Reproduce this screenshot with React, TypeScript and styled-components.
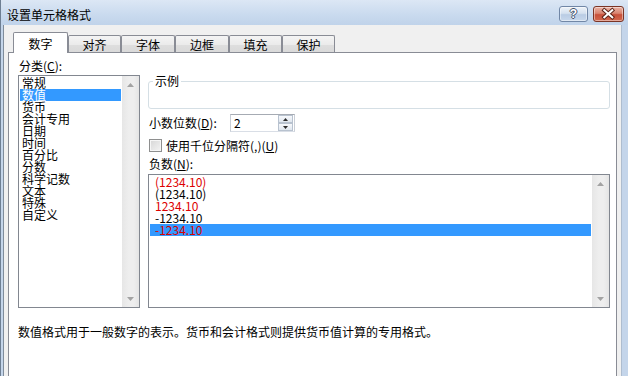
import React from "react";
import styled, { createGlobalStyle } from "styled-components";

const FONT = `"Noto Sans CJK SC", "Noto Sans", "Liberation Sans", sans-serif`;

const GlobalStyle = createGlobalStyle`
  html, body { margin: 0; padding: 0; background: #fff; }
  body { font-family: ${FONT}; font-size: 12px; color: #000; }
  * { box-sizing: border-box; }
`;

const Window = styled.div`
  width: 628px;
  height: 376px;
  overflow: hidden;
  display: flex;
  flex-direction: column;
  background: #c4d5ea;
  border-left: 1px solid #6e7f93;
  font-family: ${FONT};
  font-size: 12px;
`;

const TitleBar = styled.div`
  height: 25px;
  flex: none;
  display: flex;
  align-items: flex-start;
  justify-content: space-between;
  padding: 0 4px 0 6px;
  background: linear-gradient(#dce7f5, #c9daee 60%, #c0d3ea);
`;

const Title = styled.div`
  margin-top: 8px;
  line-height: 14px;
  color: #000;
`;

const Buttons = styled.div`
  margin-top: 6px;
  display: flex;
  gap: 5px;
`;

const CaptionButton = styled.div<{ $w: number; $close?: boolean }>`
  width: ${(p) => p.$w}px;
  height: 16px;
  border-radius: 3px;
  border: 1px solid ${(p) => (p.$close ? "#7b3526" : "#7187a6")};
  background: ${(p) =>
    p.$close
      ? "linear-gradient(#eab3a6, #d98571 45%, #c8503a 55%, #d2694f)"
      : "linear-gradient(#eef3f9, #d5e1ef 45%, #b9cce4 55%, #c8d8ec)"};
  box-shadow: inset 0 0 0 1px rgba(255, 255, 255, 0.45);
  display: flex;
  align-items: center;
  justify-content: center;
`;

const HelpGlyph = styled.span`
  font-family: "Liberation Sans", sans-serif;
  font-weight: bold;
  font-size: 12px;
  line-height: 12px;
  color: #fff;
  text-shadow: 1px 0 0 #42536d, -1px 0 0 #42536d, 0 1px 0 #42536d, 0 -1px 0 #42536d;
`;

const ClientRow = styled.div`
  flex: 1;
  display: flex;
  padding: 0 6px 0 2px;
  background: #c4d5ea;
  min-height: 0;
`;

const Client = styled.div`
  flex: 1;
  display: flex;
  flex-direction: column;
  background: #f0f0f0;
  border-left: 1px solid #7f8c9b;
  border-right: 1px solid #aebdcf;
  padding: 0 4px;
`;

const TabStrip = styled.div`
  height: 28px;
  flex: none;
  display: flex;
  align-items: flex-end;
  padding-left: 5px;
`;

const Tab = styled.div<{ $active?: boolean; $w: number }>`
  width: ${(p) => p.$w}px;
  height: ${(p) => (p.$active ? 21 : 18)}px;
  display: flex;
  align-items: center;
  justify-content: center;
  padding-top: ${(p) => (p.$active ? 2 : 1)}px;
  line-height: 14px;
  border: 1px solid #898c95;
  border-bottom: none;
  border-radius: 2px 2px 0 0;
  background: ${(p) =>
    p.$active ? "#fff" : "linear-gradient(#f4f4f4, #ebebeb 50%, #dedede 52%, #d9d9d9)"};
  position: relative;
  z-index: ${(p) => (p.$active ? 2 : 0)};
`;

const Panel = styled.div`
  margin-top: -1px;
  height: 340px;
  flex: none;
  background: #fff;
  border: 1px solid #898c95;
  padding: 6px 6px 0 9px;
  position: relative;
  z-index: 1;
`;

const Columns = styled.div`
  display: grid;
  grid-template-columns: 122px 462px;
  column-gap: 8px;
`;

const Column = styled.div`
  display: flex;
  flex-direction: column;
`;

const Label = styled.div<{ $gap?: number }>`
  line-height: 14px;
  height: 14px;
  padding-left: 1px;
  margin-top: ${(p) => p.$gap ?? 0}px;
`;

const ListBox = styled.div<{ $h?: number; $gap: number }>`
  display: flex;
  margin-top: ${(p) => p.$gap}px;
  border: 1px solid #828790;
  background: #fff;
  ${(p) => (p.$h ? `height: ${p.$h}px;` : "flex: 1;")}
`;

const Items = styled.div`
  flex: 1;
  padding: 1px;
  display: flex;
  flex-direction: column;
  min-width: 0;
`;

const Item = styled.div<{ $sel?: boolean; $red?: boolean; $pad: number }>`
  height: 12px;
  line-height: 12px;
  padding-left: ${(p) => p.$pad}px;
  white-space: nowrap;
  background: ${(p) => (p.$sel ? "#3399ff" : "transparent")};
  color: ${(p) => (p.$red ? "#dd0000" : p.$sel ? "#fff" : "#000")};
`;

const ScrollBar = styled.div`
  width: 17px;
  flex: none;
  display: flex;
  flex-direction: column;
  justify-content: space-between;
  background: linear-gradient(90deg, #e6e6e6, #eeeeee 40%, #eeeeee 70%, #e4e4e4);
`;

const ScrollArrow = styled.div`
  height: 17px;
  display: flex;
  align-items: center;
  justify-content: center;
`;

const Sample = styled.fieldset`
  margin: 15px 0 0 0;
  padding: 0;
  min-width: 0;
  height: 35px;
  border: 1px solid #d5dfe5;
  border-radius: 3px;
`;

const Legend = styled.legend`
  margin-left: 4px;
  padding: 0 2px;
  line-height: 14px;
`;

const FieldRow = styled.div`
  margin-top: 5px;
  height: 18px;
  display: flex;
  align-items: center;
`;

const FieldLabel = styled.div`
  width: 82px;
  padding-left: 1px;
  line-height: 14px;
`;

const Spin = styled.div`
  width: 65px;
  height: 18px;
  display: flex;
  border: 1px solid;
  border-color: #a6abb3 #c9ced6 #d9dee6 #c9ced6;
  background: #fff;
`;

const SpinValue = styled.div`
  flex: 1;
  padding-left: 3px;
  line-height: 16px;
`;

const SpinButtons = styled.div`
  width: 16px;
  display: flex;
  flex-direction: column;
  padding: 0 1px 0 0;
`;

const SpinButton = styled.div`
  flex: 1;
  border: 1px solid #b8c2cf;
  background: linear-gradient(#f7f9fc, #dfe6ee);
  display: flex;
  align-items: center;
  justify-content: center;
`;

const CheckRow = styled.div`
  margin-top: 6px;
  height: 15px;
  display: flex;
  align-items: center;
  gap: 4px;
  line-height: 14px;
`;

const CheckBox = styled.div`
  width: 13px;
  height: 13px;
  margin-left: 1px;
  border: 1px solid #8e8f8f;
  background: linear-gradient(135deg, #d6d6d6, #f4f4f4);
  box-shadow: inset 0 0 0 1px #f6f6f6;
`;

const Description = styled.div`
  margin-top: 17px;
  line-height: 14px;
`;

const Tri = ({ down }: { down?: boolean }) => (
  <svg width="7" height="4" viewBox="0 0 7 4">
    <path d={down ? "M0 0H7L3.5 4Z" : "M0 4H7L3.5 0Z"} fill="#a3a3a3" />
  </svg>
);

const SmallTri = ({ down }: { down?: boolean }) => (
  <svg width="5" height="3" viewBox="0 0 5 3">
    <path d={down ? "M0 0H5L2.5 3Z" : "M0 3H5L2.5 0Z"} fill="#2b2b2b" />
  </svg>
);

const Scroll = () => (
  <ScrollBar>
    <ScrollArrow>
      <Tri />
    </ScrollArrow>
    <ScrollArrow>
      <Tri down />
    </ScrollArrow>
  </ScrollBar>
);

const tabs = [
  { label: "数字", w: 55, active: true },
  { label: "对齐", w: 53 },
  { label: "字体", w: 54 },
  { label: "边框", w: 54 },
  { label: "填充", w: 53 },
  { label: "保护", w: 53 },
];

const categories = ["常规", "数值", "货币", "会计专用", "日期", "时间", "百分比", "分数", "科学记数", "文本", "特殊", "自定义"];

const negatives = [
  { t: "(1234.10)", red: true },
  { t: "(1234.10)" },
  { t: "1234.10", red: true },
  { t: "-1234.10" },
  { t: "-1234.10", red: true, sel: true },
];

export default function App() {
  return (
    <>
      <GlobalStyle />
      <Window>
        <TitleBar>
          <Title>设置单元格格式</Title>
          <Buttons>
            <CaptionButton $w={29}>
              <HelpGlyph>?</HelpGlyph>
            </CaptionButton>
            <CaptionButton $w={31} $close>
              <svg width="31" height="14" viewBox="0 0 31 14">
                <path d="M11 3L19.5 10.5M19.5 3L11 10.5" stroke="#5a2216" strokeWidth="4.2" strokeLinecap="square" />
                <path d="M11 3L19.5 10.5M19.5 3L11 10.5" stroke="#fff" strokeWidth="2.2" strokeLinecap="square" />
              </svg>
            </CaptionButton>
          </Buttons>
        </TitleBar>
        <ClientRow>
          <Client>
            <TabStrip>
              {tabs.map((t) => (
                <Tab key={t.label} $w={t.w} $active={t.active}>
                  {t.label}
                </Tab>
              ))}
            </TabStrip>
            <Panel>
              <Columns>
                <Column>
                  <Label>
                    分类(<u>C</u>):
                  </Label>
                  <ListBox $h={233} $gap={2}>
                    <Items>
                      {categories.map((c, i) => (
                        <Item key={c} $pad={2} $sel={i === 1}>
                          {c}
                        </Item>
                      ))}
                    </Items>
                    <Scroll />
                  </ListBox>
                </Column>
                <Column>
                  <Sample>
                    <Legend>示例</Legend>
                  </Sample>
                  <FieldRow>
                    <FieldLabel>
                      小数位数(<u>D</u>):
                    </FieldLabel>
                    <Spin>
                      <SpinValue>2</SpinValue>
                      <SpinButtons>
                        <SpinButton>
                          <SmallTri />
                        </SpinButton>
                        <SpinButton>
                          <SmallTri down />
                        </SpinButton>
                      </SpinButtons>
                    </Spin>
                  </FieldRow>
                  <CheckRow>
                    <CheckBox />
                    <span>
                      使用千位分隔符(,)(<u>U</u>)
                    </span>
                  </CheckRow>
                  <Label $gap={4}>
                    负数(<u>N</u>):
                  </Label>
                  <ListBox $gap={3}>
                    <Items>
                      {negatives.map((n, i) => (
                        <Item key={i} $pad={5} $red={n.red} $sel={n.sel}>
                          {n.t}
                        </Item>
                      ))}
                    </Items>
                    <Scroll />
                  </ListBox>
                </Column>
              </Columns>
              <Description>数值格式用于一般数字的表示。货币和会计格式则提供货币值计算的专用格式。</Description>
            </Panel>
          </Client>
        </ClientRow>
      </Window>
    </>
  );
}
